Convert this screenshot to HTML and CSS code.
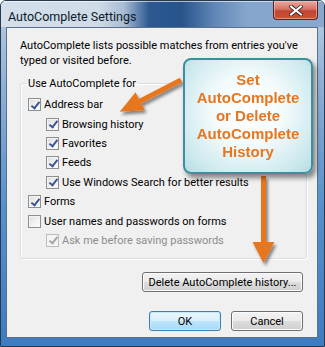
FILE: index.html
```html
<!DOCTYPE html>
<html lang="en">
<head>
  <meta charset="UTF-8" />
  <title>AutoComplete Settings</title>
  <link rel="stylesheet" href="styles.css">
</head>
<body>
  <div class="window">
    <div class="titlebar">
      <span class="title">AutoComplete Settings</span>
      <button class="close" aria-label="Close">
        <svg width="14" height="11" viewBox="0 0 14 11">
          <path d="M2 1.5 L12 9.5 M12 1.5 L2 9.5" stroke="#3d2020" stroke-width="3.6" stroke-linecap="square" />
          <path d="M2 1.5 L12 9.5 M12 1.5 L2 9.5" stroke="#fff" stroke-width="2" stroke-linecap="square" />
        </svg>
      </button>
    </div>

    <div class="client">
      <p class="intro">AutoComplete lists possible matches from entries you've typed or visited before.</p>

      <fieldset class="group">
        <legend>Use AutoComplete for</legend>
        <label class="check"><span class="box checked"></span>Address bar</label>
        <label class="check sub"><span class="box checked"></span>Browsing history</label>
        <label class="check sub"><span class="box checked"></span>Favorites</label>
        <label class="check sub"><span class="box checked"></span>Feeds</label>
        <label class="check sub"><span class="box checked"></span>Use Windows Search for better results</label>
        <label class="check"><span class="box checked"></span>Forms</label>
        <label class="check"><span class="box"></span>User names and passwords on forms</label>
        <label class="check sub disabled"><span class="box checked"></span>Ask me before saving passwords</label>
      </fieldset>

      <div class="row-delete">
        <button class="btn wide">Delete AutoComplete history...</button>
      </div>
      <div class="row-actions">
        <button class="btn default">OK</button>
        <button class="btn">Cancel</button>
      </div>
    </div>

    <!-- annotation overlay -->
    <svg class="arrows" width="325" height="347" viewBox="0 0 325 347">
      <defs>
        <filter id="shade" x="-20%" y="-20%" width="150%" height="150%">
          <feDropShadow dx="2" dy="3" stdDeviation="1.6" flood-color="#000" flood-opacity="0.45" />
        </filter>
      </defs>
      <g filter="url(#shade)" fill="#e8761f">
        <g transform="translate(181 80) rotate(152.7)">
          <rect x="0" y="-2.5" width="50" height="5" />
          <polygon points="46,-10 69,0 46,10" />
        </g>
        <rect x="261" y="176" width="5" height="70" />
        <polygon points="252.5,242 274.5,242 263.5,263" />
      </g>
    </svg>

    <div class="callout">Set<br>AutoComplete<br>or Delete<br>AutoComplete<br>History</div>
  </div>
</body>
</html>
```

FILE: styles.css
```css
:root {
  --frame-dark: #26394f;
  --client-bg: #f0f0f0;
  --arrow: #e8761f;
  --group-line: #d5dfe5;
}
body {
  margin: 0;
  background: #fff;
  font-family: Roboto, "Liberation Sans", sans-serif;
  font-size: 11px;
  color: #000;
}
.window {
  position: relative;
  width: 325px;
  height: 347px;
  box-sizing: border-box;
  border: 1px solid var(--frame-dark);
  border-radius: 6px 6px 0 0;
  background: linear-gradient(180deg, #b9cde2 0, #8eb0d6 25%, #5690cc 60%, #3e7bc0 100%);
  display: flex;
  flex-direction: column;
  overflow: hidden;
}
.titlebar {
  height: 26px;
  flex: none;
  display: flex;
  align-items: flex-start;
  background: linear-gradient(90deg, #d4dfeb 0, #cfdbe8 30%, #a9bdd4 38%, #2b5890 46%, #28548c 56%, #5f86b5 66%, #85a6cc 76%, #88a8cd 100%);
  box-shadow: inset 0 1px 0 rgba(255,255,255,0.6);
}
.title {
  padding: 8px 0 0 7px;
  font-size: 12.5px;
  line-height: 15px;
  color: #0c1a2a;
}
.close {
  margin-left: auto;
  margin-right: 6px;
  width: 45px;
  height: 19px;
  padding: 0;
  border: 1px solid #5b2323;
  border-top: none;
  border-radius: 0 0 4px 4px;
  background: linear-gradient(180deg, #e9aa9f 0, #d47466 45%, #c24533 55%, #c8542f 100%);
  box-shadow: inset 0 0 0 1px rgba(255,210,200,0.5);
  display: flex;
  align-items: center;
  justify-content: center;
}
.client {
  flex: 1;
  margin: 0 6px 8px 5px;
  border: 1px solid #5b718a;
  background: var(--client-bg);
  display: flex;
  flex-direction: column;
}
.client > * {
  flex: none;
}
.intro {
  margin: 0;
  padding: 10px 4px 0 13px;
  line-height: 15px;
}
.group {
  margin: 8px 10px 0 13px;
  padding: 4px 6px 8px 7px;
  border: 1px solid var(--group-line);
  border-radius: 3px;
  box-shadow: inset 1px 1px 0 #fff, 1px 1px 0 #fff;
}
.group legend {
  padding: 0 2px;
  margin-left: -2px;
  line-height: 15px;
}
.check {
  display: flex;
  align-items: center;
  height: 19.4px;
  gap: 3px;
}
.check.sub {
  padding-left: 18px;
}
.check.disabled {
  color: #8d8d8d;
}
.box {
  position: relative;
  width: 13px;
  height: 13px;
  box-sizing: border-box;
  border: 1px solid #8e8f8f;
  background: linear-gradient(135deg, #dcdcdc 0, #f2f2f2 55%, #fff 100%);
  box-shadow: inset 0 0 0 1px #f4f4f4;
  flex: none;
}
.box.checked::after {
  content: "";
  position: absolute;
  left: 3.5px;
  top: 0.5px;
  width: 3px;
  height: 7px;
  border: solid #3d5596;
  border-width: 0 2px 2px 0;
  transform: rotate(38deg);
}
.disabled .box {
  border-color: #bcbcbc;
  background: #f4f4f4;
}
.disabled .box.checked::after {
  border-color: #a6a6a6;
}
.row-delete,
.row-actions {
  display: flex;
  justify-content: flex-end;
  padding-right: 14px;
}
.row-delete {
  margin-top: 13px;
}
.row-actions {
  margin-top: 19px;
  gap: 10px;
}
.btn {
  font: inherit;
  color: #000;
  height: 20px;
  width: 72px;
  padding: 0;
  border: 1px solid #707070;
  border-radius: 3px;
  background: linear-gradient(180deg, #f2f2f2 0, #ebebeb 50%, #dddddd 50%, #cfcfcf 100%);
  box-shadow: inset 0 0 0 1px #fbfbfb;
}
.btn.wide {
  width: 161px;
}
.btn.default {
  border-color: #3c7fb1;
  background: linear-gradient(180deg, #eaf6fd 0, #d9f0fc 50%, #bee6fd 50%, #a7d9f5 100%);
  box-shadow: inset 0 0 0 1px #c6e9fb;
}
.arrows {
  position: absolute;
  left: -1px;
  top: -1px;
  pointer-events: none;
}
.callout {
  position: absolute;
  left: 182px;
  top: 57px;
  width: 130px;
  height: 116px;
  box-sizing: border-box;
  padding-top: 11px;
  border: 2px solid #3f8e9d;
  border-radius: 8px;
  background: radial-gradient(ellipse at 50% 45%, #ffffff 0, #f4fbfc 40%, #cde9ee 80%, #b5dde4 100%);
  box-shadow: 3px 4px 5px rgba(0,0,0,0.45);
  font-family: "Liberation Sans", Arial, sans-serif;
  font-weight: bold;
  font-size: 15px;
  line-height: 18px;
  color: #e8761f;
  text-align: center;
}
```
